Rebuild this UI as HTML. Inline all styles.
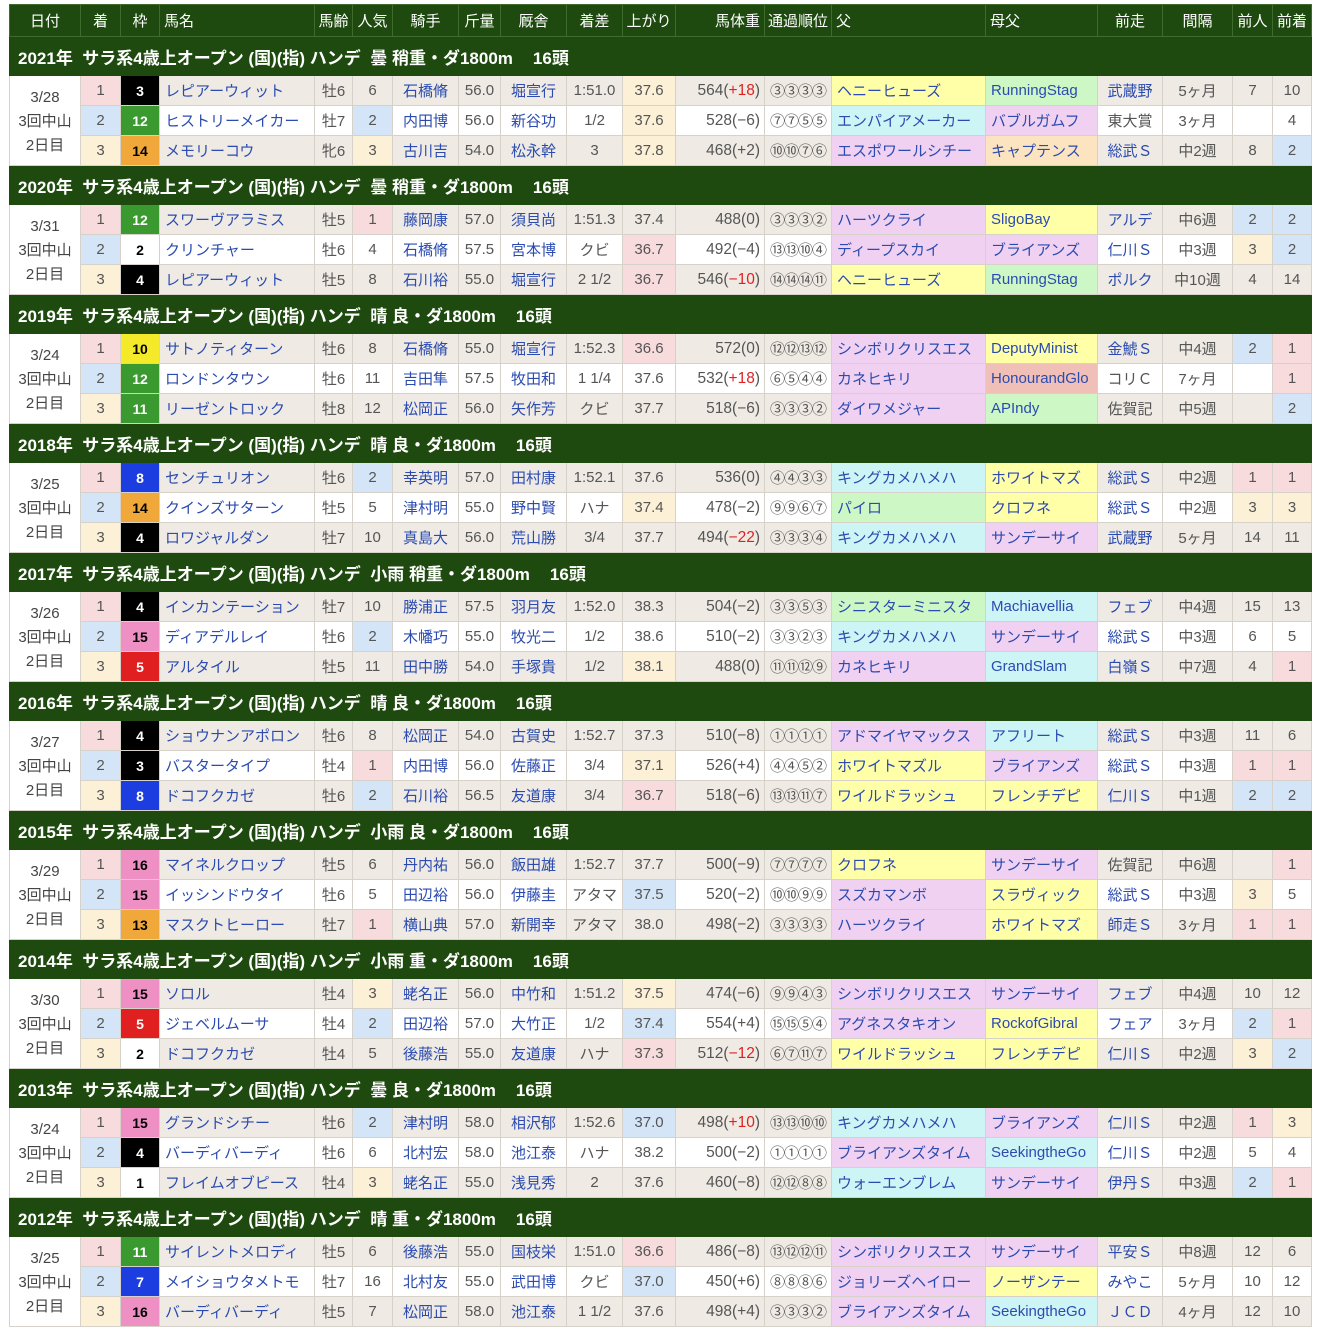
<!DOCTYPE html>
<html><head><meta charset="utf-8">
<style>
body{margin:0;background:#fff;font-family:"Liberation Sans","Noto Sans CJK JP",sans-serif;}
table{position:absolute;left:9px;top:4px;border-collapse:collapse;table-layout:fixed;width:1302px;font-size:15px;color:#555;}
td,th{border:1px solid #d6d2ca;padding:0;text-align:center;white-space:nowrap;overflow:hidden;}
thead th{background:#1f4a0f;color:#fff;font-weight:normal;height:31px;border-color:#3f6b2c;font-size:15px;}
th.l{text-align:left;padding-left:4px}
th.r{text-align:right;padding-right:4px}
tr.rh td{background:#1f4a0f;color:#fff;font-weight:bold;font-size:17px;text-align:left;padding-left:8px;height:38px;border-color:#1f4a0f;}
tr.o td{background:#efebe4;height:29px}
tr.e td{background:#fff;height:29px}
td.d{background:#fff!important;line-height:24px;color:#444;padding-top:2px}
td.l{text-align:left;padding-left:5px}
td.r{text-align:right;padding-right:4px;font-size:15.5px}
td.a{color:#2b4bb0}
td.k{font-family:"Noto Sans CJK JP",sans-serif;font-size:15px;letter-spacing:-1px;color:#555}
tr td.p{background:#f8dcdd}
tr td.b{background:#d5e5f8}
tr td.c{background:#fcf0d6}
tr td.Y{background:#ffffa8}
tr td.C{background:#cdf5f6}
tr td.P{background:#f0d1f2}
tr td.G{background:#cdf8c6}
tr td.O{background:#fce4c0}
tr td.R{background:#f0c0b8}
tr td.w{font-weight:bold;font-size:14px;color:#000}
tr td.w1{background:#fff}
tr td.w2{background:#000;color:#fff}
tr td.w3{background:#e02020;color:#fff}
tr td.w4{background:#1c3ee0;color:#fff}
tr td.w5{background:#f4ea2a}
tr td.w6{background:#3a9a30;color:#fff}
tr td.w7{background:#f0a83a}
tr td.w8{background:#ee90c4}
.red{color:#e02020}
.g{display:inline-block;width:20px}
</style></head><body>
<table>
<colgroup><col style="width:71px"><col style="width:40px"><col style="width:39px"><col style="width:155px"><col style="width:38px"><col style="width:40px"><col style="width:66px"><col style="width:42px"><col style="width:66px"><col style="width:56px"><col style="width:53px"><col style="width:89px"><col style="width:67px"><col style="width:154px"><col style="width:112px"><col style="width:65px"><col style="width:70px"><col style="width:40px"><col style="width:39px"></colgroup>
<thead><tr><th>日付</th><th>着</th><th>枠</th><th class="l">馬名</th><th>馬齢</th><th>人気</th><th>騎手</th><th>斤量</th><th>厩舎</th><th>着差</th><th>上がり</th><th class="r">馬体重</th><th>通過順位</th><th class="l">父</th><th class="l">母父</th><th>前走</th><th>間隔</th><th>前人</th><th>前着</th></tr></thead>
<tbody>
<tr class="rh"><td colspan="19">2021年&nbsp; サラ系4歳上オープン (国)(指) ハンデ&nbsp; 曇 稍重・ダ1800m<span class="g"></span>16頭</td></tr>
<tr class="o"><td class="d" rowspan="3">3/28<br>3回中山<br>2日目</td><td class="p">1</td><td class="w w2">3</td><td class="l a">レピアーウィット</td><td>牡6</td><td>6</td><td class="a">石橋脩</td><td>56.0</td><td class="a">堀宣行</td><td>1:51.0</td><td class="c">37.6</td><td class="r">564(<span class="red">+18</span>)</td><td class="k">③③③③</td><td class="l a Y">ヘニーヒューズ</td><td class="l a G">RunningStag</td><td class="a">武蔵野</td><td>5ヶ月</td><td>7</td><td>10</td></tr>
<tr class="e"><td class="b">2</td><td class="w w6">12</td><td class="l a">ヒストリーメイカー</td><td>牡7</td><td class="b">2</td><td class="a">内田博</td><td>56.0</td><td class="a">新谷功</td><td>1/2</td><td class="c">37.6</td><td class="r">528(−6)</td><td class="k">⑦⑦⑤⑤</td><td class="l a C">エンパイアメーカー</td><td class="l a P">バブルガムフ</td><td>東大賞</td><td>3ヶ月</td><td></td><td>4</td></tr>
<tr class="o"><td class="c">3</td><td class="w w7">14</td><td class="l a">メモリーコウ</td><td>牝6</td><td class="c">3</td><td class="a">古川吉</td><td>54.0</td><td class="a">松永幹</td><td>3</td><td class="c">37.8</td><td class="r">468(+2)</td><td class="k">⑩⑩⑦⑥</td><td class="l a P">エスポワールシチー</td><td class="l a O">キャプテンス</td><td class="a">総武Ｓ</td><td>中2週</td><td>8</td><td class="b">2</td></tr>

<tr class="rh"><td colspan="19">2020年&nbsp; サラ系4歳上オープン (国)(指) ハンデ&nbsp; 曇 稍重・ダ1800m<span class="g"></span>16頭</td></tr>
<tr class="o"><td class="d" rowspan="3">3/31<br>3回中山<br>2日目</td><td class="p">1</td><td class="w w6">12</td><td class="l a">スワーヴアラミス</td><td>牡5</td><td class="p">1</td><td class="a">藤岡康</td><td>57.0</td><td class="a">須貝尚</td><td>1:51.3</td><td>37.4</td><td class="r">488(0)</td><td class="k">③③③②</td><td class="l a P">ハーツクライ</td><td class="l a Y">SligoBay</td><td class="a">アルデ</td><td>中6週</td><td class="b">2</td><td class="b">2</td></tr>
<tr class="e"><td class="b">2</td><td class="w w1">2</td><td class="l a">クリンチャー</td><td>牡6</td><td>4</td><td class="a">石橋脩</td><td>57.5</td><td class="a">宮本博</td><td>クビ</td><td class="p">36.7</td><td class="r">492(−4)</td><td class="k">⑬⑬⑩④</td><td class="l a P">ディープスカイ</td><td class="l a P">ブライアンズ</td><td class="a">仁川Ｓ</td><td>中3週</td><td class="c">3</td><td class="b">2</td></tr>
<tr class="o"><td class="c">3</td><td class="w w2">4</td><td class="l a">レピアーウィット</td><td>牡5</td><td>8</td><td class="a">石川裕</td><td>55.0</td><td class="a">堀宣行</td><td>2 1/2</td><td class="p">36.7</td><td class="r">546(<span class="red">−10</span>)</td><td class="k">⑭⑭⑭⑪</td><td class="l a Y">ヘニーヒューズ</td><td class="l a G">RunningStag</td><td class="a">ポルク</td><td>中10週</td><td>4</td><td>14</td></tr>

<tr class="rh"><td colspan="19">2019年&nbsp; サラ系4歳上オープン (国)(指) ハンデ&nbsp; 晴 良・ダ1800m<span class="g"></span>16頭</td></tr>
<tr class="o"><td class="d" rowspan="3">3/24<br>3回中山<br>2日目</td><td class="p">1</td><td class="w w5">10</td><td class="l a">サトノティターン</td><td>牡6</td><td>8</td><td class="a">石橋脩</td><td>55.0</td><td class="a">堀宣行</td><td>1:52.3</td><td class="p">36.6</td><td class="r">572(0)</td><td class="k">⑫⑫⑬⑫</td><td class="l a P">シンボリクリスエス</td><td class="l a Y">DeputyMinist</td><td class="a">金鯱Ｓ</td><td>中4週</td><td class="b">2</td><td class="p">1</td></tr>
<tr class="e"><td class="b">2</td><td class="w w6">12</td><td class="l a">ロンドンタウン</td><td>牡6</td><td>11</td><td class="a">吉田隼</td><td>57.5</td><td class="a">牧田和</td><td>1 1/4</td><td>37.6</td><td class="r">532(<span class="red">+18</span>)</td><td class="k">⑥⑤④④</td><td class="l a P">カネヒキリ</td><td class="l a R">HonourandGlo</td><td>コリＣ</td><td>7ヶ月</td><td></td><td class="p">1</td></tr>
<tr class="o"><td class="c">3</td><td class="w w6">11</td><td class="l a">リーゼントロック</td><td>牡8</td><td>12</td><td class="a">松岡正</td><td>56.0</td><td class="a">矢作芳</td><td>クビ</td><td>37.7</td><td class="r">518(−6)</td><td class="k">③③③②</td><td class="l a P">ダイワメジャー</td><td class="l a G">APIndy</td><td>佐賀記</td><td>中5週</td><td></td><td class="b">2</td></tr>

<tr class="rh"><td colspan="19">2018年&nbsp; サラ系4歳上オープン (国)(指) ハンデ&nbsp; 晴 良・ダ1800m<span class="g"></span>16頭</td></tr>
<tr class="o"><td class="d" rowspan="3">3/25<br>3回中山<br>2日目</td><td class="p">1</td><td class="w w4">8</td><td class="l a">センチュリオン</td><td>牡6</td><td class="b">2</td><td class="a">幸英明</td><td>57.0</td><td class="a">田村康</td><td>1:52.1</td><td>37.6</td><td class="r">536(0)</td><td class="k">④④③③</td><td class="l a C">キングカメハメハ</td><td class="l a Y">ホワイトマズ</td><td class="a">総武Ｓ</td><td>中2週</td><td class="p">1</td><td class="p">1</td></tr>
<tr class="e"><td class="b">2</td><td class="w w7">14</td><td class="l a">クインズサターン</td><td>牡5</td><td>5</td><td class="a">津村明</td><td>55.0</td><td class="a">野中賢</td><td>ハナ</td><td class="c">37.4</td><td class="r">478(−2)</td><td class="k">⑨⑨⑥⑦</td><td class="l a G">パイロ</td><td class="l a Y">クロフネ</td><td class="a">総武Ｓ</td><td>中2週</td><td class="c">3</td><td class="c">3</td></tr>
<tr class="o"><td class="c">3</td><td class="w w2">4</td><td class="l a">ロワジャルダン</td><td>牡7</td><td>10</td><td class="a">真島大</td><td>56.0</td><td class="a">荒山勝</td><td>3/4</td><td>37.7</td><td class="r">494(<span class="red">−22</span>)</td><td class="k">③③③④</td><td class="l a C">キングカメハメハ</td><td class="l a P">サンデーサイ</td><td class="a">武蔵野</td><td>5ヶ月</td><td>14</td><td>11</td></tr>

<tr class="rh"><td colspan="19">2017年&nbsp; サラ系4歳上オープン (国)(指) ハンデ&nbsp; 小雨 稍重・ダ1800m<span class="g"></span>16頭</td></tr>
<tr class="o"><td class="d" rowspan="3">3/26<br>3回中山<br>2日目</td><td class="p">1</td><td class="w w2">4</td><td class="l a">インカンテーション</td><td>牡7</td><td>10</td><td class="a">勝浦正</td><td>57.5</td><td class="a">羽月友</td><td>1:52.0</td><td>38.3</td><td class="r">504(−2)</td><td class="k">③③⑤③</td><td class="l a G">シニスターミニスタ</td><td class="l a C">Machiavellia</td><td class="a">フェブ</td><td>中4週</td><td>15</td><td>13</td></tr>
<tr class="e"><td class="b">2</td><td class="w w8">15</td><td class="l a">ディアデルレイ</td><td>牡6</td><td class="b">2</td><td class="a">木幡巧</td><td>55.0</td><td class="a">牧光二</td><td>1/2</td><td>38.6</td><td class="r">510(−2)</td><td class="k">③③②③</td><td class="l a C">キングカメハメハ</td><td class="l a P">サンデーサイ</td><td class="a">総武Ｓ</td><td>中3週</td><td>6</td><td>5</td></tr>
<tr class="o"><td class="c">3</td><td class="w w3">5</td><td class="l a">アルタイル</td><td>牡5</td><td>11</td><td class="a">田中勝</td><td>54.0</td><td class="a">手塚貴</td><td>1/2</td><td class="c">38.1</td><td class="r">488(0)</td><td class="k">⑪⑪⑫⑨</td><td class="l a P">カネヒキリ</td><td class="l a C">GrandSlam</td><td class="a">白嶺Ｓ</td><td>中7週</td><td>4</td><td class="p">1</td></tr>

<tr class="rh"><td colspan="19">2016年&nbsp; サラ系4歳上オープン (国)(指) ハンデ&nbsp; 晴 良・ダ1800m<span class="g"></span>16頭</td></tr>
<tr class="o"><td class="d" rowspan="3">3/27<br>3回中山<br>2日目</td><td class="p">1</td><td class="w w2">4</td><td class="l a">ショウナンアポロン</td><td>牡6</td><td>8</td><td class="a">松岡正</td><td>54.0</td><td class="a">古賀史</td><td>1:52.7</td><td>37.3</td><td class="r">510(−8)</td><td class="k">①①①①</td><td class="l a P">アドマイヤマックス</td><td class="l a C">アフリート</td><td class="a">総武Ｓ</td><td>中3週</td><td>11</td><td>6</td></tr>
<tr class="e"><td class="b">2</td><td class="w w2">3</td><td class="l a">バスタータイプ</td><td>牡4</td><td class="p">1</td><td class="a">内田博</td><td>56.0</td><td class="a">佐藤正</td><td>3/4</td><td class="c">37.1</td><td class="r">526(+4)</td><td class="k">④④⑤②</td><td class="l a Y">ホワイトマズル</td><td class="l a P">ブライアンズ</td><td class="a">総武Ｓ</td><td>中3週</td><td class="p">1</td><td class="p">1</td></tr>
<tr class="o"><td class="c">3</td><td class="w w4">8</td><td class="l a">ドコフクカゼ</td><td>牡6</td><td class="b">2</td><td class="a">石川裕</td><td>56.5</td><td class="a">友道康</td><td>3/4</td><td class="p">36.7</td><td class="r">518(−6)</td><td class="k">⑬⑬⑪⑦</td><td class="l a Y">ワイルドラッシュ</td><td class="l a Y">フレンチデピ</td><td class="a">仁川Ｓ</td><td>中1週</td><td class="b">2</td><td class="b">2</td></tr>

<tr class="rh"><td colspan="19">2015年&nbsp; サラ系4歳上オープン (国)(指) ハンデ&nbsp; 小雨 良・ダ1800m<span class="g"></span>16頭</td></tr>
<tr class="o"><td class="d" rowspan="3">3/29<br>3回中山<br>2日目</td><td class="p">1</td><td class="w w8">16</td><td class="l a">マイネルクロップ</td><td>牡5</td><td>6</td><td class="a">丹内祐</td><td>56.0</td><td class="a">飯田雄</td><td>1:52.7</td><td>37.7</td><td class="r">500(−9)</td><td class="k">⑦⑦⑦⑦</td><td class="l a Y">クロフネ</td><td class="l a P">サンデーサイ</td><td>佐賀記</td><td>中6週</td><td></td><td class="p">1</td></tr>
<tr class="e"><td class="b">2</td><td class="w w8">15</td><td class="l a">イッシンドウタイ</td><td>牡6</td><td>5</td><td class="a">田辺裕</td><td>56.0</td><td class="a">伊藤圭</td><td>アタマ</td><td class="b">37.5</td><td class="r">520(−2)</td><td class="k">⑩⑩⑨⑨</td><td class="l a P">スズカマンボ</td><td class="l a Y">スラヴィック</td><td class="a">総武Ｓ</td><td>中3週</td><td class="c">3</td><td>5</td></tr>
<tr class="o"><td class="c">3</td><td class="w w7">13</td><td class="l a">マスクトヒーロー</td><td>牡7</td><td class="p">1</td><td class="a">横山典</td><td>57.0</td><td class="a">新開幸</td><td>アタマ</td><td>38.0</td><td class="r">498(−2)</td><td class="k">③③③③</td><td class="l a P">ハーツクライ</td><td class="l a Y">ホワイトマズ</td><td class="a">師走Ｓ</td><td>3ヶ月</td><td class="p">1</td><td class="p">1</td></tr>

<tr class="rh"><td colspan="19">2014年&nbsp; サラ系4歳上オープン (国)(指) ハンデ&nbsp; 小雨 重・ダ1800m<span class="g"></span>16頭</td></tr>
<tr class="o"><td class="d" rowspan="3">3/30<br>3回中山<br>2日目</td><td class="p">1</td><td class="w w8">15</td><td class="l a">ソロル</td><td>牡4</td><td class="c">3</td><td class="a">蛯名正</td><td>56.0</td><td class="a">中竹和</td><td>1:51.2</td><td class="c">37.5</td><td class="r">474(−6)</td><td class="k">⑨⑨④③</td><td class="l a P">シンボリクリスエス</td><td class="l a P">サンデーサイ</td><td class="a">フェブ</td><td>中4週</td><td>10</td><td>12</td></tr>
<tr class="e"><td class="b">2</td><td class="w w3">5</td><td class="l a">ジェベルムーサ</td><td>牡4</td><td class="b">2</td><td class="a">田辺裕</td><td>57.0</td><td class="a">大竹正</td><td>1/2</td><td class="b">37.4</td><td class="r">554(+4)</td><td class="k">⑮⑮⑤④</td><td class="l a P">アグネスタキオン</td><td class="l a Y">RockofGibral</td><td class="a">フェア</td><td>3ヶ月</td><td class="b">2</td><td class="p">1</td></tr>
<tr class="o"><td class="c">3</td><td class="w w1">2</td><td class="l a">ドコフクカゼ</td><td>牡4</td><td>5</td><td class="a">後藤浩</td><td>55.0</td><td class="a">友道康</td><td>ハナ</td><td class="p">37.3</td><td class="r">512(<span class="red">−12</span>)</td><td class="k">⑥⑦⑪⑦</td><td class="l a Y">ワイルドラッシュ</td><td class="l a Y">フレンチデピ</td><td class="a">仁川Ｓ</td><td>中2週</td><td class="c">3</td><td class="b">2</td></tr>

<tr class="rh"><td colspan="19">2013年&nbsp; サラ系4歳上オープン (国)(指) ハンデ&nbsp; 曇 良・ダ1800m<span class="g"></span>16頭</td></tr>
<tr class="o"><td class="d" rowspan="3">3/24<br>3回中山<br>2日目</td><td class="p">1</td><td class="w w8">15</td><td class="l a">グランドシチー</td><td>牡6</td><td class="b">2</td><td class="a">津村明</td><td>58.0</td><td class="a">相沢郁</td><td>1:52.6</td><td class="b">37.0</td><td class="r">498(<span class="red">+10</span>)</td><td class="k">⑬⑬⑩⑩</td><td class="l a C">キングカメハメハ</td><td class="l a P">ブライアンズ</td><td class="a">仁川Ｓ</td><td>中2週</td><td class="p">1</td><td class="c">3</td></tr>
<tr class="e"><td class="b">2</td><td class="w w2">4</td><td class="l a">バーディバーディ</td><td>牡6</td><td>6</td><td class="a">北村宏</td><td>58.0</td><td class="a">池江泰</td><td>ハナ</td><td>38.2</td><td class="r">500(−2)</td><td class="k">①①①①</td><td class="l a P">ブライアンズタイム</td><td class="l a C">SeekingtheGo</td><td class="a">仁川Ｓ</td><td>中2週</td><td>5</td><td>4</td></tr>
<tr class="o"><td class="c">3</td><td class="w w1">1</td><td class="l a">フレイムオブピース</td><td>牡4</td><td class="c">3</td><td class="a">蛯名正</td><td>55.0</td><td class="a">浅見秀</td><td>2</td><td>37.6</td><td class="r">460(−8)</td><td class="k">⑫⑫⑧⑧</td><td class="l a C">ウォーエンブレム</td><td class="l a P">サンデーサイ</td><td class="a">伊丹Ｓ</td><td>中3週</td><td class="b">2</td><td class="p">1</td></tr>

<tr class="rh"><td colspan="19">2012年&nbsp; サラ系4歳上オープン (国)(指) ハンデ&nbsp; 晴 重・ダ1800m<span class="g"></span>16頭</td></tr>
<tr class="o"><td class="d" rowspan="3">3/25<br>3回中山<br>2日目</td><td class="p">1</td><td class="w w6">11</td><td class="l a">サイレントメロディ</td><td>牡5</td><td>6</td><td class="a">後藤浩</td><td>55.0</td><td class="a">国枝栄</td><td>1:51.0</td><td class="p">36.6</td><td class="r">486(−8)</td><td class="k">⑬⑫⑫⑪</td><td class="l a P">シンボリクリスエス</td><td class="l a P">サンデーサイ</td><td class="a">平安Ｓ</td><td>中8週</td><td>12</td><td>6</td></tr>
<tr class="e"><td class="b">2</td><td class="w w4">7</td><td class="l a">メイショウタメトモ</td><td>牡7</td><td>16</td><td class="a">北村友</td><td>55.0</td><td class="a">武田博</td><td>クビ</td><td class="b">37.0</td><td class="r">450(+6)</td><td class="k">⑧⑧⑧⑥</td><td class="l a P">ジョリーズヘイロー</td><td class="l a Y">ノーザンテー</td><td class="a">みやこ</td><td>5ヶ月</td><td>10</td><td>12</td></tr>
<tr class="o"><td class="c">3</td><td class="w w8">16</td><td class="l a">バーディバーディ</td><td>牡5</td><td>7</td><td class="a">松岡正</td><td>58.0</td><td class="a">池江泰</td><td>1 1/2</td><td>37.6</td><td class="r">498(+4)</td><td class="k">③③③②</td><td class="l a P">ブライアンズタイム</td><td class="l a C">SeekingtheGo</td><td class="a">ＪＣＤ</td><td>4ヶ月</td><td>12</td><td>10</td></tr>
</tbody></table>
</body></html>
